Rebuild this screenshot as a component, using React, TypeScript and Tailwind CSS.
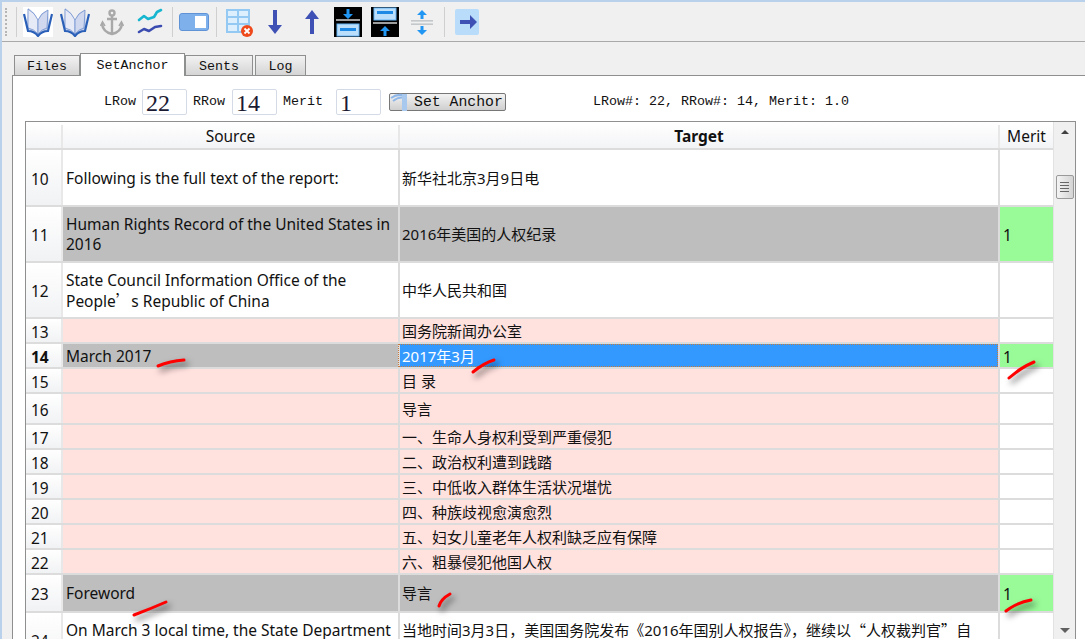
import React from 'react';

const CJK = `font-['Noto_Sans','Noto_Sans_CJK_SC',sans-serif]`;

interface Row {
  n: number;
  h: string;
  source?: React.ReactNode;
  target: React.ReactNode;
  merit?: string;
  kind: 'plain' | 'pink' | 'gray' | 'current';
}

const Wide = ({ children }: { children: React.ReactNode }) => (
  <span className="font-['Noto_Sans_CJK_SC',sans-serif]">{children}</span>
);

const rows: Row[] = [
  { n: 10, h: 'h-[57px]', source: 'Following is the full text of the report:', target: '新华社北京3月9日电', kind: 'plain' },
  { n: 11, h: 'h-[56px]', source: 'Human Rights Record of the United States in 2016', target: '2016年美国的人权纪录', merit: '1', kind: 'gray' },
  {
    n: 12,
    h: 'h-[56px]',
    source: (
      <>
        State Council Information Office of the People<Wide>’</Wide>s Republic of China
      </>
    ),
    target: '中华人民共和国',
    kind: 'plain',
  },
  { n: 13, h: 'h-[25px]', target: '国务院新闻办公室', kind: 'pink' },
  { n: 14, h: 'h-[25px]', source: 'March 2017', target: '2017年3月', merit: '1', kind: 'current' },
  { n: 15, h: 'h-[25px]', target: '目 录', kind: 'pink' },
  { n: 16, h: 'h-[31px]', target: '导言', kind: 'pink' },
  { n: 17, h: 'h-[25px]', target: '一、生命人身权利受到严重侵犯', kind: 'pink' },
  { n: 18, h: 'h-[25px]', target: '二、政治权利遭到践踏', kind: 'pink' },
  { n: 19, h: 'h-[25px]', target: '三、中低收入群体生活状况堪忧', kind: 'pink' },
  { n: 20, h: 'h-[25px]', target: '四、种族歧视愈演愈烈', kind: 'pink' },
  { n: 21, h: 'h-[25px]', target: '五、妇女儿童老年人权利缺乏应有保障', kind: 'pink' },
  { n: 22, h: 'h-[25px]', target: '六、粗暴侵犯他国人权', kind: 'pink' },
  { n: 23, h: 'h-[38px]', source: 'Foreword', target: '导言', merit: '1', kind: 'gray' },
  {
    n: 24,
    h: 'h-[56px]',
    source: 'On March 3 local time, the State Department of the United States',
    target: (
      <>
        当地时间3月3日<Wide>，</Wide>美国国务院发布<Wide>《</Wide>2016年国别人权报告<Wide>》，</Wide>继续以<Wide>“</Wide>人权裁判官<Wide>”</Wide>自
        <br />
        居，对世界上大多数国家和地区的人权状况指手画脚
      </>
    ),
    kind: 'plain',
  },
];

const Sep = () => <div className="w-px h-[30px] bg-[#cfcfcf]" />;

const Book = ({ white }: { white?: boolean }) => (
  <svg width="30" height="30" viewBox="0 0 30 30" className={white ? 'bg-white' : ''}>
    <path d="M1 8 L5 25 Q11 24 15 29 Q19 24 25 25 L29 8 L26 19 L25 3 Q18 5 15 13 Q12 5 5 1 L4 18 Z" fill="#c3cfe9" />
    <path d="M15 13 Q12 6 5 2 L5 21 Q11 22 15 27 Z" fill="#e6eaf6" stroke="#6f8fce" strokeWidth="0.8" />
    <path d="M15 13 Q18 6 25 3 L24 21 Q19 22 15 27 Z" fill="#cfd8ee" stroke="#6f8fce" strokeWidth="0.8" />
    <path d="M1 7 L5 24 Q11 24 15 29 Q19 24 25 24 L29 7" fill="none" stroke="#2a5fb8" strokeWidth="2.2" />
  </svg>
);

const Anchor = () => (
  <svg width="24" height="30" viewBox="0 0 24 30" fill="none" stroke="#a9a9a9" strokeWidth="2.4">
    <circle cx="12" cy="6" r="2.5" />
    <path d="M12 9 V26 M7 12 H17 M2 17 Q3 25 12 27 Q21 25 22 17" />
    <path d="M0.5 19 L2.5 15 L5 19 M19 19 L21.5 15 L23.5 19" strokeWidth="1.6" />
  </svg>
);

const Chart = () => (
  <svg width="26" height="30" viewBox="0 0 26 30" fill="none" strokeWidth="2.6" strokeLinecap="round" strokeLinejoin="round">
    <path d="M2 13 L7 9 L11 12 L17 10 L20 5 L24 3" stroke="#17b6d0" />
    <path d="M2 25 L7 22 L12 24 L18 20 L24 19" stroke="#3b4cb0" />
  </svg>
);

const Toggle = () => (
  <svg width="30" height="18" viewBox="0 0 30 18">
    <rect x="0.5" y="0.5" width="29" height="17" rx="2.5" fill="#7eb0ec" stroke="#5f93d6" />
    <rect x="16" y="3" width="11" height="12" fill="#ffffff" />
  </svg>
);

const GridRemove = () => (
  <svg width="28" height="30" viewBox="0 0 28 30">
    <rect x="1" y="3" width="22" height="22" fill="#ddeefc" stroke="#94c9f3" strokeWidth="2" />
    <path d="M1 10 H23 M1 17 H23 M12 3 V25" stroke="#94c9f3" strokeWidth="2" />
    <circle cx="21" cy="24" r="6" fill="#ee4a1c" />
    <path d="M18.5 21.5 L23.5 26.5 M23.5 21.5 L18.5 26.5" stroke="#ffffff" strokeWidth="1.8" />
  </svg>
);

const ArrowDown = () => (
  <svg width="16" height="26" viewBox="0 0 16 26">
    <path d="M6 1 H10 V16 H15 L8 25 L1 16 H6 Z" fill="#3f51b5" />
  </svg>
);

const ArrowUp = () => (
  <svg width="16" height="26" viewBox="0 0 16 26">
    <path d="M6 25 H10 V10 H15 L8 1 L1 10 H6 Z" fill="#3f51b5" />
  </svg>
);

const BlackDown = () => (
  <svg width="28" height="30" viewBox="0 0 28 30">
    <rect width="28" height="30" fill="#000000" />
    <path d="M12.5 2 H15.5 V7 H19 L14 12 L9 7 H12.5 Z" fill="#2196f3" />
    <rect x="2" y="12" width="24" height="2" fill="#9e9e9e" />
    <rect x="3" y="17" width="22" height="12" fill="#bbdefb" stroke="#64b5f6" />
    <rect x="6" y="21" width="16" height="3" fill="#1e88e5" />
  </svg>
);

const BlackUp = () => (
  <svg width="28" height="30" viewBox="0 0 28 30">
    <rect width="28" height="30" fill="#000000" />
    <rect x="3" y="1" width="22" height="12" fill="#bbdefb" stroke="#64b5f6" />
    <rect x="6" y="4" width="16" height="3" fill="#1e88e5" />
    <rect x="2" y="15" width="24" height="2" fill="#9e9e9e" />
    <path d="M12.5 29 H15.5 V24 H19 L14 19 L9 24 H12.5 Z" fill="#2196f3" />
  </svg>
);

const SplitArrows = () => (
  <svg width="24" height="30" viewBox="0 0 24 30">
    <path d="M10.5 12 H13.5 V8 H17 L12 3 L7 8 H10.5 Z" fill="#2196f3" />
    <rect x="1" y="13" width="22" height="1.6" fill="#c4c8cb" />
    <rect x="1" y="16.4" width="22" height="1.6" fill="#c4c8cb" />
    <path d="M10.5 19 H13.5 V23 H17 L12 28 L7 23 H10.5 Z" fill="#2196f3" />
  </svg>
);

const GoRight = () => (
  <svg width="24" height="26" viewBox="0 0 24 26">
    <rect width="24" height="26" rx="2" fill="#b9dcfa" />
    <path d="M5 11 H15 V6 L22 13 L15 20 V15 H5 Z" fill="#3f51b5" />
  </svg>
);

const Tab = ({ label, active, w }: { label: string; active?: boolean; w: string }) => (
  <div
    className={
      active
        ? `${w} h-[23px] pt-[2px] -mb-px z-10 flex items-center justify-center bg-white border border-b-0 border-[#8e8f8f]`
        : `${w} h-[20px] pt-[2px] flex items-center justify-center bg-gradient-to-b from-[#f2f2f2] to-[#d5d5d5] border border-b-0 border-[#8e8f8f]`
    }
  >
    {label}
  </div>
);

const Field = ({ label, value, labelW }: { label: string; value: string; labelW: string }) => (
  <div className="flex items-center">
    <span className={labelW}>{label}</span>
    <div className="w-[45px] h-[26px] bg-white border border-[#d5dbe6] rounded-[2px] pl-[3px] font-['Liberation_Serif',serif] text-[24px] leading-[26px] text-[#1a1a33]">
      {value}
    </div>
  </div>
);

const rowBg = (kind: Row['kind']) => {
  if (kind === 'gray' || kind === 'current') return 'bg-[#bebebe]';
  if (kind === 'pink') return 'bg-[#ffe1de]';
  return 'bg-white';
};

const TableRow = ({ row }: { row: Row }) => (
  <div className={`flex ${row.h} border-b-2 border-[#dcdcdc] text-[15.5px] leading-[20px] text-[#111111]`}>
    <div
      className={`w-[37px] shrink-0 flex items-center pl-[5px] pt-[2px] bg-gradient-to-b from-white to-[#f1f2f4] border-r-2 border-[#e8e8e8] ${
        row.kind === 'current' ? 'font-bold' : ''
      }`}
    >
      {row.n}
    </div>
    <div className={`w-[335px] shrink-0 flex items-center pl-[3px] pr-[2px] ${rowBg(row.kind)}`}>
      <div>{row.source}</div>
    </div>
    <div
      className={`w-[600px] shrink-0 overflow-hidden flex items-center pl-[2px] border-l-2 border-[#dcdcdc] text-[15px] ${
        row.kind === 'current'
          ? 'bg-[#3399ff] text-white outline-1 -outline-offset-1 outline-dotted outline-[#c87a3a]'
          : rowBg(row.kind)
      }`}
    >
      <div>{row.target}</div>
    </div>
    <div
      className={`w-[55px] shrink-0 flex items-center pl-[3px] pt-[2px] border-l-2 border-[#dcdcdc] ${
        row.merit ? 'bg-[#98fb98]' : 'bg-white'
      }`}
    >
      {row.merit}
    </div>
  </div>
);

const Scrollbar = () => (
  <div className="w-[22px] shrink-0 flex flex-col items-center bg-[#f0f0f0] border-l border-[#e2e2e2] relative">
    <div className="mt-[8px] w-0 h-0 border-l-[4px] border-r-[4px] border-b-[4px] border-l-transparent border-r-transparent border-b-[#404040]" />
    <div className="mt-[41px] w-[18px] h-[24px] rounded-[2px] border border-[#9a9a9a] bg-gradient-to-r from-[#f4f4f4] to-[#d4d4d4] flex flex-col items-center justify-center gap-[2px]">
      <div className="w-[9px] h-px bg-[#666666]" />
      <div className="w-[9px] h-px bg-[#666666]" />
      <div className="w-[9px] h-px bg-[#666666]" />
      <div className="w-[9px] h-px bg-[#666666]" />
    </div>
    <div className="mt-auto mb-[7px] w-0 h-0 border-l-[5px] border-r-[5px] border-t-[5px] border-l-transparent border-r-transparent border-t-[#606060]" />
  </div>
);

const Marks = () => (
  <svg
    className="absolute inset-0 pointer-events-none drop-shadow-[3px_4px_3px_rgba(0,0,0,0.6)]"
    width="1085"
    height="639"
    fill="none"
    stroke="#ff0000"
    strokeWidth="3"
    strokeLinecap="round"
  >
    <path d="M158 366 Q170 361 184 360" />
    <path d="M473 372 Q484 363 494 360" />
    <path d="M1009 378 Q1020 368 1034 362" />
    <path d="M134 615 Q150 609 166 602" />
    <path d="M439 606 Q441 599 450 594" />
    <path d="M1006 611 Q1016 603 1031 600" />
  </svg>
);

export default function App() {
  return (
    <div className={`relative w-[1085px] h-[639px] overflow-hidden bg-[#f0f0f0] border-t-2 border-l-2 border-[#b9d1ea] ${CJK}`}>
      <div className="h-[40px] flex items-center border-b border-[#a9a9a9] -ml-px">
        <div className="w-[2px] h-[28px] ml-[4px] border-l-2 border-dotted border-[#b5b5b5]" />
        <div className="ml-[9px]"><Sep /></div>
        <div className="ml-[6px] flex items-center gap-[7px]">
          <Book white />
          <Book />
        </div>
        <div className="ml-[10px]"><Anchor /></div>
        <div className="ml-[13px]"><Chart /></div>
        <div className="ml-[9px]"><Sep /></div>
        <div className="ml-[6px]"><Toggle /></div>
        <div className="ml-[7px]"><Sep /></div>
        <div className="ml-[9px]"><GridRemove /></div>
        <div className="ml-[13px]"><ArrowDown /></div>
        <div className="ml-[21px]"><ArrowUp /></div>
        <div className="ml-[14px]"><BlackDown /></div>
        <div className="ml-[9px]"><BlackUp /></div>
        <div className="ml-[11px]"><SplitArrows /></div>
        <div className="ml-[10px]"><Sep /></div>
        <div className="ml-[10px]"><GoRight /></div>
      </div>

      <div className="pl-[10px] pt-[10px]">
        <div className="flex items-end h-[23px] ml-[2px] font-['Liberation_Mono',monospace] text-[13.33px] text-[#111111]">
          <Tab label="Files" w="w-[66px]" />
          <Tab label="SetAnchor" active w="w-[105px]" />
          <Tab label="Sents" w="w-[68px]" />
          <Tab label="Log" w="w-[51px] ml-[2px]" />
        </div>
        <div className="bg-white border border-[#8e8f8f] border-r-0 h-[600px] pl-[12px] pr-[10px]">
          <div className="h-[45px] pt-[7px] flex items-center font-['Liberation_Mono',monospace] text-[13.33px] text-[#111111]">
            <div className="ml-[79px] flex items-center gap-[6px]">
              <Field label="LRow" value="22" labelW="w-[38px]" />
              <Field label="RRow" value="14" labelW="w-[39px]" />
              <Field label="Merit" value="1" labelW="w-[53px]" />
            </div>
            <div className="ml-[8px] w-[117px] h-[18px] flex items-center rounded-[2px] border border-[#777777] bg-gradient-to-b from-[#f3f3f3] to-[#cfcfcf] text-[14.8px]">
              <svg width="24" height="20" viewBox="0 0 24 20" className="shrink-0 -my-1">
                <path d="M1 6 Q8 1 16 4 M3 9 Q9 4 15 6" fill="none" stroke="#8fb8e8" strokeWidth="2" />
                <rect x="12" y="2" width="5" height="17" fill="#a9c8ee" />
              </svg>
              <span className="whitespace-nowrap">Set Anchor</span>
            </div>
            <span className="ml-[87px] whitespace-nowrap">LRow#: 22, RRow#: 14, Merit: 1.0</span>
          </div>

          <div className="flex w-[1051px] h-[520px] border border-[#8e8f8f] overflow-hidden">
            <div className="w-[1027px] shrink-0">
              <div className="flex h-[28px] pt-[3px] border-b-2 border-[#dcdcdc] text-[15.5px] text-[#111111] bg-gradient-to-b from-white to-[#f3f4f6]">
                <div className="w-[37px] shrink-0 border-r-2 border-[#e8e8e8]" />
                <div className="w-[335px] shrink-0 flex items-center justify-center">Source</div>
                <div className="w-[600px] shrink-0 flex items-center justify-center font-bold border-l-2 border-[#e8e8e8]">Target</div>
                <div className="w-[55px] shrink-0 flex items-center justify-center border-l-2 border-[#e8e8e8]">Merit</div>
              </div>
              {rows.map((row) => (
                <TableRow key={row.n} row={row} />
              ))}
            </div>
            <Scrollbar />
          </div>
        </div>
      </div>
      <div className="absolute -left-[2px] -top-[2px]">
        <Marks />
      </div>
    </div>
  );
}
